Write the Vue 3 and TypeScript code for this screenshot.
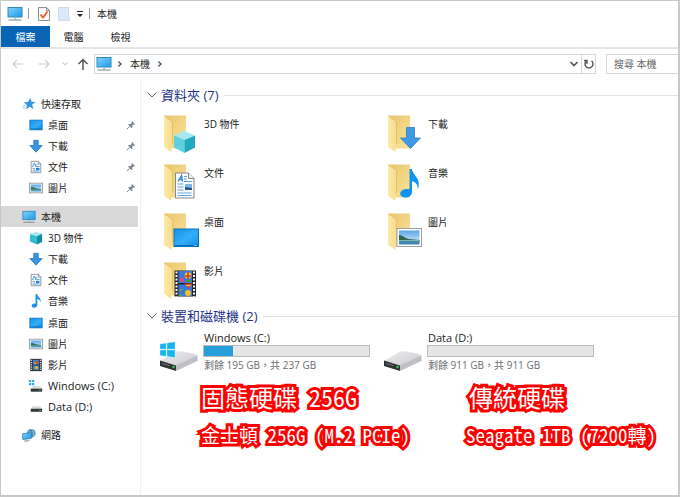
<script setup lang="ts">
interface TreeItem {
  label: string
  icon: string
  root?: boolean
  pinned?: boolean
  selected?: boolean
}

interface Drive {
  name: string
  free: string
  used: number
  icon: string
}

const groups: { name: string; items: TreeItem[] }[] = [
  {
    name: 'quick-access',
    items: [
      { label: '快速存取', icon: 'star', root: true },
      { label: '桌面', icon: 'desktop', pinned: true },
      { label: '下載', icon: 'download', pinned: true },
      { label: '文件', icon: 'doc', pinned: true },
      { label: '圖片', icon: 'picture', pinned: true },
    ],
  },
  {
    name: 'pc',
    items: [
      { label: '本機', icon: 'pc', root: true, selected: true },
      { label: '3D 物件', icon: 'cube' },
      { label: '下載', icon: 'download' },
      { label: '文件', icon: 'doc' },
      { label: '音樂', icon: 'music' },
      { label: '桌面', icon: 'desktop' },
      { label: '圖片', icon: 'picture' },
      { label: '影片', icon: 'film' },
      { label: 'Windows (C:)', icon: 'drive-c' },
      { label: 'Data (D:)', icon: 'drive-d' },
    ],
  },
  { name: 'net', items: [{ label: '網路', icon: 'network', root: true }] },
]

const folders = [
  { label: '3D 物件', icon: 'big-cube' },
  { label: '下載', icon: 'big-download' },
  { label: '文件', icon: 'big-doc' },
  { label: '音樂', icon: 'big-music' },
  { label: '桌面', icon: 'big-desktop' },
  { label: '圖片', icon: 'big-picture' },
  { label: '影片', icon: 'big-film' },
]

const drives: Drive[] = [
  { name: 'Windows (C:)', free: '剩餘 195 GB，共 237 GB', used: 17.5, icon: 'big-drive-c' },
  { name: 'Data (D:)', free: '剩餘 911 GB，共 911 GB', used: 0, icon: 'big-drive-d' },
]

const tabs = ['電腦', '檢視']
</script>

<template>
  <div class="window">
    <svg class="defs" aria-hidden="true">
      <defs>
        <linearGradient id="g-screen" x1="0" y1="0" x2="1" y2="1">
          <stop offset="0" stop-color="#7fd3fb" /><stop offset="1" stop-color="#1d9bea" />
        </linearGradient>
        <linearGradient id="g-desk" x1="0" y1="0" x2="1" y2="1">
          <stop offset="0" stop-color="#1590e6" /><stop offset=".55" stop-color="#35aefa" /><stop offset="1" stop-color="#0f8ce4" />
        </linearGradient>
        <linearGradient id="g-folder" x1="0" y1="0" x2="1" y2="1">
          <stop offset="0" stop-color="#e9c66d" /><stop offset="1" stop-color="#fbe39c" />
        </linearGradient>
        <linearGradient id="g-flap" x1="0" y1="0" x2="1" y2="0">
          <stop offset="0" stop-color="#fde9a9" /><stop offset="1" stop-color="#f8dc8a" />
        </linearGradient>
        <linearGradient id="g-disk" x1="0" y1="0" x2="1" y2="1">
          <stop offset="0" stop-color="#ececed" /><stop offset="1" stop-color="#c9cacd" />
        </linearGradient>
        <linearGradient id="g-sky" x1="0" y1="0" x2="0" y2="1">
          <stop offset="0" stop-color="#5aa4e6" /><stop offset="1" stop-color="#e2f3fb" />
        </linearGradient>
      </defs>

      <symbol id="star" viewBox="0 0 16 16">
        <path d="M9.500 1l1.400 4.500 4.600.2-3.900 2.900 1.400 5-4-2.600L4.500 14l1.200-4.700L2 6l4.800-.4z" fill="#2f96e6" />
        <path d="M1 10h3M1 12.500h2.500" stroke="#6db9ef" />
      </symbol>
      <symbol id="desktop" viewBox="0 0 16 16">
        <rect x="1" y="2.500" width="14" height="11" fill="url(#g-desk)" stroke="#0b78c8" />
        <path d="M2 12.500h12" stroke="#0a68b4" />
      </symbol>
      <symbol id="download" viewBox="0 0 16 16">
        <path d="M5.500 1.500h5v6H15l-7 7.500-7-7.500h4.500z" fill="#3a93e0" stroke="#2b7cc8" />
      </symbol>
      <symbol id="doc" viewBox="0 0 16 16">
        <path d="M2.500 1.500h8l3 3v10h-11z" fill="#fbfcfd" stroke="#888e94" />
        <path d="M10.500 1.500v3h3" fill="none" stroke="#888e94" />
        <path d="M4 8l1.500-4h1l1.500 4M7 5.500h2.500M8.500 7.500H12M4 10h3M4 12.500h8" fill="none" stroke="#2f8fd8" />
        <rect x="8" y="9" width="4" height="2.500" fill="#2f7fc4" />
      </symbol>
      <symbol id="picture" viewBox="0 0 16 16">
        <rect x=".5" y="2.500" width="15" height="11" fill="#fff" stroke="#92979b" />
        <rect x="2" y="4" width="12" height="8" fill="url(#g-sky)" />
        <path d="M2 7c3-.5 5 2 12 2v1H2z" fill="#35715a" /><path d="M2 10h12v2H2z" fill="#4f9fc4" />
      </symbol>
      <symbol id="pc" viewBox="0 0 16 16">
        <rect x="1" y="1.500" width="14" height="9.500" fill="url(#g-screen)" stroke="#3388b8" />
        <path d="M7 11.500h2v2H7z" fill="#b6c0c7" />
        <path d="M1.500 14h13" stroke="#6d8796" />
      </symbol>
      <symbol id="cube" viewBox="0 0 16 16">
        <path d="M8 1l7 2-5 3-9-2.500z" fill="#a6e8ef" />
        <path d="M1 3.500L9 6v9.500L1 12z" fill="#35bccd" />
        <path d="M9 6l6-3v9.500l-6 3z" fill="#118fa6" />
      </symbol>
      <symbol id="music" viewBox="0 0 16 16">
        <path d="M7.500 0h1.800c.3 3.600 5.500 4.800 3.800 9.800-.1-2.700-1.800-3.700-3.600-4v6.600c0 2.200-1.800 3.300-3.700 3.300-1.700 0-2.800-.9-2.800-2.300 0-1.700 2-2.900 4.500-2.400z" fill="#1493ec" />
      </symbol>
      <symbol id="film" viewBox="0 0 16 16">
        <rect x="1.500" y="1" width="13" height="14" fill="#28282a" />
        <rect x="4.500" y="2" width="7" height="5.500" fill="#3f7fd6" /><rect x="4.500" y="8.500" width="7" height="5.500" fill="#3f7fd6" />
        <circle cx="9" cy="4.800" r="1.800" fill="#d9482b" /><circle cx="7" cy="6" r="1" fill="#f3c62e" />
        <circle cx="8.500" cy="11" r="1.800" fill="#e8bd23" /><path d="M5 13h4" stroke="#3c8435" />
        <path d="M3 2v12M13 2v12" stroke="#f1f1f1" stroke-width="1.200" stroke-dasharray="1.300 1.300" />
      </symbol>
      <symbol id="drive-c" viewBox="0 0 16 16">
        <path d="M0 1h2.500v2.500H0zM3.500 1H6v2.500H3.500zM0 4.500h2.500V7H0zM3.500 4.500H6V7H3.500z" fill="#19afea" />
        <path d="M4 8h9l2 3H2z" fill="#dadcdd" /><rect x="2" y="11" width="13" height="3.500" fill="#35383a" />
        <path d="M11.500 12.800h2" stroke="#35c15a" />
      </symbol>
      <symbol id="drive-d" viewBox="0 0 16 16">
        <path d="M4 7h9l2 3.500H2z" fill="#d8dadb" /><rect x="2" y="10" width="13" height="3.500" fill="#35383a" />
        <path d="M11.500 12h2" stroke="#35c15a" />
      </symbol>
      <symbol id="network" viewBox="0 0 16 16">
        <circle cx="10.500" cy="6" r="5" fill="#4d8fb2" /><path d="M7 3.500c3 1 3 4 1 6M11 1.500c2 2 3 5 2 8" stroke="#a8d4e6" fill="none" />
        <path d="M.8 6.500l9.700-1v6.500l-9.700 1z" fill="url(#g-screen)" stroke="#3388b8" />
        <path d="M5 13v1.500M2.500 15l6-.5" stroke="#718b9a" />
      </symbol>
      <symbol id="pin" viewBox="0 0 12 12">
        <path d="M7 1l4 4-1.200.5-1 .2L7.500 7l.2 2-1 1L2.500 5.700l1-1 2 .1 1.200-1.400z" fill="#7f8c96" />
        <path d="M4.500 7.500L1 11" stroke="#7f8c96" stroke-width="1.200" />
      </symbol>

      <symbol id="folder" viewBox="0 0 38 41">
        <path d="M3 2.500h21v33H9.500z" fill="url(#g-folder)" />
        <path d="M2 2.500L9.500 8q1 .8 1 2v21l-1 2.200v5.800L2.700 34.600q-.7-.5-.7-1.500z" fill="url(#g-flap)" />
        <path d="M2 2.500L9.500 8q1 .8 1 2v21" fill="none" stroke="#e5bd62" stroke-width=".8" />
      </symbol>
      <symbol id="big-cube" viewBox="0 0 38 41">
        <use href="#folder" />
        <path d="M22.500 18L33 22.500 22.500 27 12 22.500z" fill="#a8e9f1" />
        <path d="M12 22.500L22.500 27v13L12 34.500z" fill="#5cd0df" /><path d="M22.500 27L33 22.500v12L22.500 40z" fill="#23a9bf" />
      </symbol>
      <symbol id="big-download" viewBox="0 0 38 41">
        <use href="#folder" /><path d="M20.500 14.500h8v10.500h6l-10 10.500-10-10.500h6z" fill="#3f9ae8" stroke="#2c7dc9" stroke-width=".8" />
      </symbol>
      <symbol id="big-doc" viewBox="0 0 38 41">
        <use href="#folder" />
        <path d="M13.500 11h13l5.500 5.500V36H13.500z" fill="#fdfdfd" stroke="#83898d" />
        <path d="M26.500 11v5.500H32" fill="#e8ecef" stroke="#83898d" />
        <path d="M16 19.500l3.500-6 1 6M17.500 17.500h3" fill="none" stroke="#2d85ce" stroke-width="1.400" />
        <path d="M22 14.500h3M22 17h3M22 19.500h8M15.500 22h6M15.500 25h6M15.500 28h6M15.500 31h14M15.500 33.500h14" stroke="#5ba1d8" />
        <rect x="23" y="22" width="7" height="6" fill="#78b9e4" /><path d="M23 25l7 1v2h-7z" fill="#245784" />
      </symbol>
      <symbol id="big-music" viewBox="0 0 38 41">
        <use href="#folder" />
        <path d="M23.500 7h2.500c.5 6.500 9.500 8.500 6 20.500-.2-5-2.500-7.500-6-8.200V30c0 3.500-3 5.600-6.500 5.600-3.100 0-5.300-1.500-5.300-4 0-3.100 4-5.200 9.300-4.600z" fill="#0f93f2" />
      </symbol>
      <symbol id="big-desktop" viewBox="0 0 38 41">
        <use href="#folder" /><rect x="12" y="18" width="24.500" height="17.500" fill="url(#g-desk)" stroke="#0a72c4" />
        <path d="M12.500 34.500h23.500" stroke="#0869b7" /><path d="M32 34.500h3" stroke="#8cc8f2" stroke-width=".8" />
      </symbol>
      <symbol id="big-picture" viewBox="0 0 38 41">
        <use href="#folder" /><rect x="11" y="17.500" width="24.500" height="18" fill="#fff" stroke="#9b9fa2" />
        <rect x="13" y="19.500" width="20.500" height="14" fill="url(#g-sky)" />
        <path d="M13 24c4 0 5 3 10 4l10.500 1v1.500H13z" fill="#2f6650" /><path d="M13 29.500h20.500v4H13z" fill="#4386b1" /><path d="M13 29.500h20.500" stroke="#8fc6b2" stroke-width=".8" />
      </symbol>
      <symbol id="big-film" viewBox="0 0 38 41">
        <use href="#folder" /><rect x="12.500" y="10.500" width="21.500" height="26" fill="#252527" />
        <rect x="16.500" y="11" width="13.500" height="12" fill="#3c76dc" /><rect x="16.500" y="24.500" width="13.500" height="11.500" fill="#3c76dc" />
        <circle cx="26" cy="15.500" r="3.300" fill="#f1c928" /><path d="M23 16h6M26 12v7" stroke="#c93a2b" stroke-width="1.500" />
        <circle cx="20" cy="20" r="2.200" fill="#d94a87" /><path d="M24 21h5" stroke="#3a9e3b" stroke-width="2" />
        <path d="M22.500 23.500h8l-4 5z" fill="#d7452e" /><path d="M24 25.500h5" stroke="#f4cb2b" />
        <circle cx="26" cy="33" r="3" fill="#f0c125" /><path d="M17 31l4-2M17 35h3" stroke="#55a94b" stroke-width="1.500" />
        <path d="M14.500 11.500v25M32 11.500v25" stroke="#f5f5f5" stroke-width="2" stroke-dasharray="2 1.500" />
      </symbol>
      <symbol id="disk" viewBox="0 0 40 32">
        <path d="M2 21L18 11.500q8-1 21 3.500L16 27z" fill="url(#g-disk)" />
        <path d="M2 20.500L18 25.500V31L2 26z" fill="#303334" />
        <path d="M18 25.500L39.500 15v6L18 31z" fill="#bfc0c4" />
        <path d="M4 23.500l8 2.300" stroke="#71777a" /><circle cx="15.500" cy="27" r="1.200" fill="#38d353" />
      </symbol>
      <symbol id="big-drive-c" viewBox="0 0 40 32">
        <use href="#disk" />
        <path d="M2 4l6.200-1v6.200H2zM9 2.900L17 1.700v7.500H9zM2 10h6.200v6.400L2 15.400zM9 10h8v7.500l-8-1.100z" fill="#17b5ef" stroke="#fff" stroke-width=".3" />
      </symbol>
      <symbol id="big-drive-d" viewBox="0 0 40 32"><use href="#disk" /></symbol>
    </svg>

    <header class="titlebar">
      <svg class="icon"><use href="#pc" /></svg>
      <i class="sep"></i>
      <button class="quick" aria-label="內容">
        <svg viewBox="0 0 14 16" width="14" height="16"><path d="M1.500 1.500h8l3 3v10h-11z" fill="#fafafa" stroke="#8f8f8f" /><path d="M9.500 1.500v3h3" fill="none" stroke="#8f8f8f" /><path d="M3.500 8.500l2.500 3 4.500-6" fill="none" stroke="#ec5a24" stroke-width="1.800" /></svg>
      </button>
      <button class="quick" aria-label="新增資料夾">
        <svg viewBox="0 0 14 16" width="14" height="16"><path d="M1.500 1.500h10v10h1v3h-11z" fill="#dce8f7" stroke="#cbdcf0" /></svg>
      </button>
      <button class="quick narrow" aria-label="自訂快速存取工具列">
        <svg viewBox="0 0 8 8" width="8" height="8"><path d="M1 1.500h6" stroke="#222" /><path d="M1 4h6L4 7z" fill="#222" /></svg>
      </button>
      <i class="sep"></i>
      <span class="title">本機</span>
    </header>

    <nav class="tabs">
      <button class="tab file">檔案</button>
      <button v-for="tab in tabs" :key="tab" class="tab">{{ tab }}</button>
    </nav>

    <div class="navbar">
      <button class="nav" aria-label="上一頁"><svg viewBox="0 0 12 12"><path d="M11.500 6H1M5 2L1 6l4 4" stroke="#cfcfcf" /></svg></button>
      <button class="nav" aria-label="下一頁"><svg viewBox="0 0 12 12"><path d="M.5 6H11M7 2l4 4-4 4" stroke="#cfcfcf" /></svg></button>
      <button class="nav small" aria-label="最近的位置"><svg viewBox="0 0 12 12"><path d="M3.500 4.500L6 7l2.500-2.500" stroke="#cfcfcf" /></svg></button>
      <button class="nav up" aria-label="上移"><svg viewBox="0 0 12 12"><path d="M6 12V1.500M1.500 6L6 1.500 10.500 6" stroke="#555" stroke-width="1.500" /></svg></button>
      <div class="address">
        <svg class="icon"><use href="#pc" /></svg>
        <svg class="chev" viewBox="0 0 8 8"><path d="M2.500 1.500L5 4 2.500 6.500" /></svg>
        <a class="crumb" href="#pc">本機</a>
        <svg class="chev" viewBox="0 0 8 8"><path d="M2.500 1.500L5 4 2.500 6.500" /></svg>
        <span class="grow"></span>
        <button class="drop" aria-label="先前的位置"><svg viewBox="0 0 10 10" width="10" height="10"><path d="M1.500 3L5 6.500 8.500 3" fill="none" stroke="#555" stroke-width="1.600" /></svg></button>
        <button class="reload" aria-label="重新整理"><svg viewBox="0 0 12 12" width="12" height="12"><path d="M8.500 2.800A4 4 0 1 1 3.500 2.800M4 6V2.500H1" fill="none" stroke="#555" stroke-width="1.400" /></svg></button>
      </div>
      <input class="search" type="text" aria-label="搜尋 本機" placeholder="搜尋 本機" />
    </div>

    <div class="body">
      <aside class="tree">
        <div v-for="group in groups" :key="group.name" class="group" :class="group.name">
          <a v-for="item in group.items" :key="item.label" href="#pc" class="row" :class="{ root: item.root, selected: item.selected }">
            <svg class="tree-icon"><use :href="'#' + item.icon" /></svg>
            <span :class="{ latin: item.label.includes(':') }">{{ item.label }}</span>
            <svg v-if="item.pinned" class="pin"><use href="#pin" /></svg>
          </a>
        </div>
      </aside>

      <main class="content">
        <h2 class="section">
          <svg viewBox="0 0 10 10"><path d="M.5 2.500L5 7l4.500-4.500" /></svg>
          資料夾 (7)
        </h2>
        <div class="grid folders">
          <a v-for="folder in folders" :key="folder.label" href="#pc" class="folder">
            <svg class="folder-icon"><use :href="'#' + folder.icon" /></svg>
            <span>{{ folder.label }}</span>
          </a>
        </div>

        <h2 class="section">
          <svg viewBox="0 0 10 10"><path d="M.5 2.500L5 7l4.500-4.500" /></svg>
          裝置和磁碟機 (2)
        </h2>
        <div class="grid drives">
          <a v-for="drive in drives" :key="drive.name" href="#pc" class="drive">
            <svg class="drive-icon"><use :href="'#' + drive.icon" /></svg>
            <span class="info">
              <span class="latin name">{{ drive.name }}</span>
              <span class="bar"><span class="used" :style="{ width: drive.used + '%' }"></span></span>
              <span class="free">{{ drive.free }}</span>
            </span>
          </a>
        </div>

        <div class="notes">
          <div class="note">
            <strong>固態硬碟 256G</strong>
            <span>金士頓 256G (M.2 PCIe)</span>
          </div>
          <div class="note">
            <strong class="inset">傳統硬碟</strong>
            <span>Seagate 1TB (7200轉)</span>
          </div>
        </div>
      </main>
    </div>
  </div>
</template>

<style>
body {
  margin: 0;
  background: #fff;
}
</style>

<style scoped>
.window {
  box-sizing: border-box;
  min-height: 100vh;
  display: flex;
  flex-direction: column;
  border: 1px solid #c8c8c8;
  border-right-width: 2px;
  border-bottom-width: 2px;
  background: #fff;
  color: #1b1b1b;
  font: 10px/14px "Open Sans", "Noto Sans CJK TC", sans-serif;
}
.defs {
  position: absolute;
  width: 0;
  height: 0;
}
button {
  padding: 0;
  border: 0;
  background: none;
  color: inherit;
  font: inherit;
}
a {
  color: inherit;
  text-decoration: none;
}
.icon {
  width: 16px;
  height: 16px;
  flex: none;
}
.titlebar {
  display: flex;
  align-items: center;
  height: 25px;
  padding-left: 6px;
}
.sep {
  width: 1px;
  height: 11px;
  margin: 0 7px 0 5px;
  background: #999;
}
.quick {
  display: flex;
  margin-left: 1px;
  margin-right: 5px;
}
.quick.narrow {
  margin: 0;
}
.tabs {
  display: flex;
  height: 21px;
  border-bottom: 2px solid #e6e6e6;
}
.tab {
  width: 47px;
}
.tab.file {
  width: 49px;
  background: #0a64b4;
  color: #fff;
}
.navbar {
  display: flex;
  align-items: center;
  height: 30px;
}
.nav {
  display: flex;
  justify-content: center;
  width: 26px;
}
.nav:first-child {
  margin-left: 4px;
}
.nav.small {
  width: 15px;
}
.nav.up {
  width: 22px;
}
.nav svg {
  width: 12px;
  height: 12px;
  fill: none;
  stroke-width: 1.2px;
}
.address {
  display: flex;
  align-items: center;
  box-sizing: border-box;
  flex: 1;
  height: 20px;
  border: 1px solid #d6d6d6;
  padding-left: 1px;
}
.chev {
  width: 8px;
  height: 8px;
  margin-left: 4px;
  fill: none;
  stroke: #444;
  stroke-width: 1.2;
}
.crumb {
  margin: 0 2px 0 6px;
}
.grow {
  flex: 1;
}
.drop,
.reload {
  display: flex;
  align-items: center;
  justify-content: center;
  width: 14px;
  height: 18px;
}
.reload {
  border-left: 1px solid #d6d6d6;
}
.search {
  box-sizing: border-box;
  width: 72px;
  height: 20px;
  margin-left: 10px;
  padding: 0 0 0 7px;
  border: 1px solid #d6d6d6;
  border-right: 0;
  border-radius: 0;
  font: inherit;
  background: #fff;
}
.search::placeholder {
  color: #666;
  opacity: 1;
}
.body {
  flex: 1;
  display: flex;
}
.tree {
  width: 139px;
  padding-top: 14px;
  border-right: 1px solid #f0f0f0;
}
.group {
  display: grid;
  grid-auto-rows: 1fr;
}
.group.quick-access {
  height: 105px;
  margin-bottom: 8px;
}
.group.pc {
  height: 212px;
  margin-bottom: 6px;
}
.group.net {
  height: 21px;
}
.row {
  display: flex;
  align-items: center;
  gap: 5px;
  padding-left: 28px;
  margin-right: 2px;
}
.row.root {
  padding-left: 21px;
}
.row.selected {
  background: #d9d9d9;
}
.tree-icon {
  width: 14px;
  height: 14px;
}
.pin {
  width: 10px;
  height: 10px;
  margin: 0 2px 0 auto;
}
.latin {
  font-size: 11px;
}
.content {
  flex: 1;
  padding-top: 6px;
}
.section {
  display: flex;
  align-items: center;
  gap: 4px;
  margin: 0;
  padding-left: 6px;
  height: 20px;
  font-size: 13px;
  font-weight: 400;
  color: #1f3287;
}
.section svg {
  width: 10px;
  height: 10px;
  fill: none;
  stroke: #666;
}
.section::after {
  content: "";
  flex: 1;
  height: 1px;
  margin-left: 2px;
  background: #e2e2e2;
}
.grid {
  display: grid;
  grid-template-columns: 224px 224px;
}
.folders {
  grid-auto-rows: 42px;
  row-gap: 7px;
  padding: 8px 0 4px 21px;
}
.folder {
  display: flex;
  gap: 4px;
}
.folder-icon {
  width: 38px;
  height: 41px;
}
.folder span {
  padding-top: 4px;
}
.drives {
  padding: 5px 0 0 17px;
}
.drive {
  display: flex;
  gap: 5px;
}
.drive-icon {
  width: 40px;
  height: 32px;
  padding-top: 9px;
}
.info {
  display: flex;
  flex-direction: column;
  width: 167px;
}
.name {
  padding-left: 1px;
}
.bar {
  box-sizing: border-box;
  height: 12px;
  border: 1px solid #bcbcbc;
  background: #e6e6e6;
}
.used {
  display: block;
  height: 100%;
  background: #26a0da;
}
.free {
  padding: 1px 0 0 1px;
  color: #6d6d6d;
}
.notes {
  display: grid;
  grid-template-columns: 265px auto;
  padding: 9px 0 0 60px;
}
.note {
  display: flex;
  flex-direction: column;
  gap: 10px;
  color: #fff;
  font-family: "Noto Sans Mono CJK TC", "Noto Sans CJK TC", sans-serif;
  font-feature-settings: "hwid";
  font-size: 19px;
  line-height: 24px;
  -webkit-text-stroke: 6px #f00;
  paint-order: stroke fill;
  stroke-linejoin: round;
  white-space: nowrap;
}
.note strong {
  font-size: 24px;
  line-height: 32px;
  font-weight: 400;
}
.inset {
  padding-left: 3px;
}
</style>
